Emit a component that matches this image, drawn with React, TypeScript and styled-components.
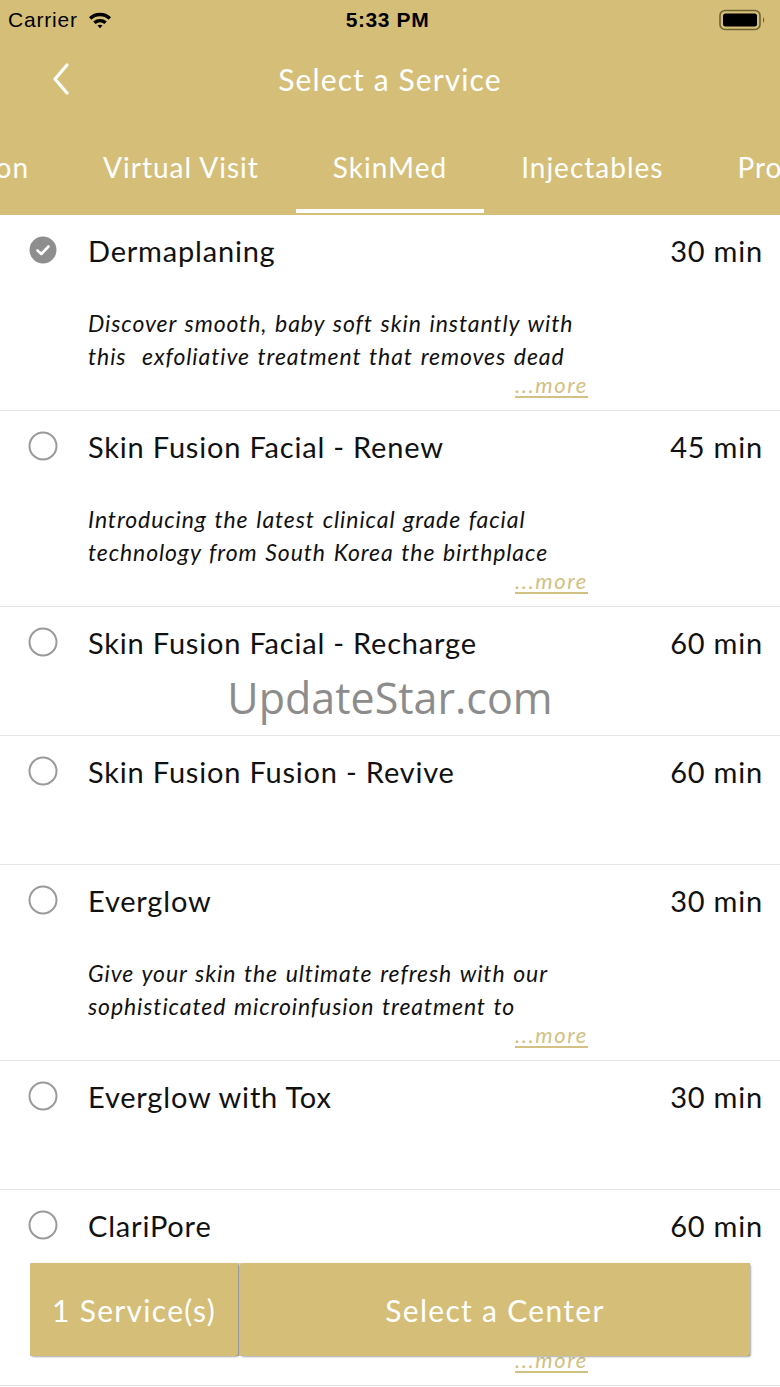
import styled, { createGlobalStyle } from 'styled-components';

const GOLD = '#d5bf78';

const GlobalStyle = createGlobalStyle`
  html, body { margin: 0; padding: 0; background: #fff; }
  * { box-sizing: border-box; }
`

const Page = styled.div`
  position: relative;
  width: 780px;
  height: 1387px;
  overflow: hidden;
  background: #fff;
  font-family: Lato, "Noto Sans", sans-serif;
`
const Header = styled.div`
  background: ${GOLD};
  height: 215px;
  display: flex;
  flex-direction: column;
`
const StatusBar = styled.div`
  height: 40px;
  display: grid;
  grid-template-columns: 1fr auto 1fr;
  align-items: center;
  padding: 0 13px 0 8px;
  font-family: "Liberation Sans", Arial, sans-serif;
  color: #000;
`
const Carrier = styled.div`
  display: flex;
  align-items: center;
  gap: 10px;
  font-size: 21px;
  letter-spacing: 0.8px;
`
const Clock = styled.div`
  font-size: 21px;
  font-weight: bold;
  letter-spacing: 0.6px;
`
const BatteryWrap = styled.div`
  display: flex;
  justify-content: flex-end;
  align-items: center;
`
const NavBar = styled.div`
  height: 78px;
  display: grid;
  grid-template-columns: 100px 1fr 100px;
  align-items: center;
`
const BackButton = styled.div`
  display: flex;
  align-items: center;
  padding-left: 50px;
`
const Title = styled.div`
  text-align: center;
  color: #fff;
  font-size: 30px;
  letter-spacing: 1.1px;
`
const TabStrip = styled.div`
  flex: 1;
  display: grid;
  grid-template-columns: 1fr auto 1fr;
  overflow: hidden;
`
const TabGroup = styled.div<{ $side: 'left' | 'right' }>`
  display: flex;
  justify-content: ${p => (p.$side === 'left' ? 'flex-end' : 'flex-start')};
  overflow: hidden;
  min-width: 0;
`
const Tab = styled.div<{ $active?: boolean }>`
  flex-shrink: 0;
  display: flex;
  align-items: center;
  padding: 6px 37px 0;
  color: #fff;
  font-size: 28px;
  letter-spacing: 1px;
  white-space: nowrap;
  border-bottom: 4px solid ${p => (p.$active ? '#fff' : 'transparent')};
  margin-bottom: 2px;
`
const List = styled.div`
  display: flex;
  flex-direction: column;
`
const Row = styled.div<{ $tall: boolean }>`
  height: ${p => (p.$tall ? 196 : 129)}px;
  border-bottom: 1px solid #e4e4e4;
  padding-right: 17px;
  flex-shrink: 0;
`
const TopLine = styled.div`
  height: 70px;
  display: grid;
  grid-template-columns: 88px 1fr auto;
  align-items: center;
  color: #111;
  font-size: 29px;
  letter-spacing: 0.8px;
`
const RadioCell = styled.div`
  display: flex;
  justify-content: center;
  padding-right: 2px;
`
const Desc = styled.div`
  margin: 22px 0 0 88px;
  width: 502px;
  display: flex;
  flex-direction: column;
`
const DescText = styled.div`
  font-style: italic;
  font-size: 23px;
  letter-spacing: 0.9px;
  word-spacing: 1.5px;
  line-height: 33px;
  color: #111;
  height: 66px;
  padding-right: 16px;
  overflow: hidden;
  white-space: pre-wrap;
`
const More = styled.div`
  align-self: flex-end;
  margin-right: 2px;
  font-style: italic;
  font-size: 22px;
  letter-spacing: 1.6px;
  line-height: 24px;
  color: #d2c182;
  text-decoration: underline;
  text-underline-offset: 3px;
`
const BottomBar = styled.div`
  position: absolute;
  left: 30px;
  right: 30px;
  bottom: 31px;
  height: 93px;
  display: grid;
  grid-template-columns: 208px 1fr;
  gap: 2px;
  background: #cfcfcf;
`
const ActionButton = styled.div`
  background: ${GOLD};
  border-radius: 3px;
  box-shadow: 1px 1px 2px rgba(0, 0, 0, 0.35);
  display: flex;
  align-items: center;
  justify-content: center;
  color: #fff;
  font-size: 30px;
  letter-spacing: 1.3px;
`
const Watermark = styled.div`
  position: absolute;
  left: 0;
  right: 0;
  top: 668px;
  text-align: center;
  font-family: "Open Sans", "Noto Sans", sans-serif;
  font-size: 43px;
  color: #8c8c8c;
`

const services = [
  { name: 'Dermaplaning', time: '30 min', checked: true, desc: 'Discover smooth, baby soft skin instantly with this  exfoliative treatment that removes dead skin cells and fine vellus hair.' },
  { name: 'Skin Fusion Facial - Renew', time: '45 min', desc: 'Introducing the latest clinical grade facial technology from South Korea the birthplace of modern skin care.' },
  { name: 'Skin Fusion Facial - Recharge', time: '60 min' },
  { name: 'Skin Fusion Fusion - Revive', time: '60 min' },
  { name: 'Everglow', time: '30 min', desc: 'Give your skin the ultimate refresh with our sophisticated microinfusion treatment to deliver serums deep into the skin.' },
  { name: 'Everglow with Tox', time: '30 min' },
  { name: 'ClariPore', time: '60 min', desc: 'A deep pore cleansing treatment for clear, balanced and radiant looking skin every day.' },
];

function Radio({ checked }: { checked?: boolean }) {
  if (checked) {
    return (
      <svg width="28" height="28" viewBox="0 0 28 28">
        <circle cx="14" cy="14" r="13.5" fill="#8e8e8e" />
        <path d="M8.5 14.5 L12.3 18 L19.5 10.5" fill="none" stroke="#fff" strokeWidth="2.6" strokeLinecap="round" strokeLinejoin="round" />
      </svg>
    );
  }
  return (
    <svg width="30" height="30" viewBox="0 0 30 30">
      <circle cx="15" cy="15" r="13.5" fill="none" stroke="#9a9a9a" strokeWidth="2" />
    </svg>
  );
}

export default function App() {
  return (
    <Page>
      <GlobalStyle />
      <Header>
        <StatusBar>
          <Carrier>
            Carrier
            <svg width="24" height="18" viewBox="0 0 24 18">
              <path d="M1 6.2 A16 16 0 0 1 23 6.2 L20.6 8.7 A12.6 12.6 0 0 0 3.4 8.7 Z" fill="#000" />
              <path d="M5.2 10.4 A10.6 10.6 0 0 1 18.8 10.4 L16.4 12.9 A7.2 7.2 0 0 0 7.6 12.9 Z" fill="#000" />
              <path d="M9.5 14.6 A4.4 4.4 0 0 1 14.5 14.6 L12 17.2 Z" fill="#000" />
            </svg>
          </Carrier>
          <Clock>5:33 PM</Clock>
          <BatteryWrap>
            <svg width="48" height="22" viewBox="0 0 48 22">
              <rect x="1" y="1.5" width="40" height="19" rx="5" fill="none" stroke="#6f6232" strokeWidth="1.6" />
              <rect x="4" y="4.5" width="34" height="13" rx="2.5" fill="#000" />
              <path d="M44 8 Q46.5 11 44 14 Z" fill="#6f6232" />
            </svg>
          </BatteryWrap>
        </StatusBar>
        <NavBar>
          <BackButton>
            <svg width="22" height="34" viewBox="0 0 22 34">
              <path d="M17 3 L5 17 L17 31" fill="none" stroke="#fff" strokeWidth="3.2" strokeLinecap="round" strokeLinejoin="round" />
            </svg>
          </BackButton>
          <Title>Select a Service</Title>
          <div />
        </NavBar>
        <TabStrip>
          <TabGroup $side="left">
            <Tab>Consultation</Tab>
            <Tab>Virtual Visit</Tab>
          </TabGroup>
          <Tab $active>SkinMed</Tab>
          <TabGroup $side="right">
            <Tab>Injectables</Tab>
            <Tab>Products</Tab>
          </TabGroup>
        </TabStrip>
      </Header>
      <List>
        {services.map(s => (
          <Row key={s.name} $tall={!!s.desc}>
            <TopLine>
              <RadioCell><Radio checked={s.checked} /></RadioCell>
              <span>{s.name}</span>
              <span>{s.time}</span>
            </TopLine>
            {s.desc && (
              <Desc>
                <DescText>{s.desc}</DescText>
                <More>...more</More>
              </Desc>
            )}
          </Row>
        ))}
      </List>
      <Watermark>UpdateStar.com</Watermark>
      <BottomBar>
        <ActionButton>1 Service(s)</ActionButton>
        <ActionButton>Select a Center</ActionButton>
      </BottomBar>
    </Page>
  );
}
